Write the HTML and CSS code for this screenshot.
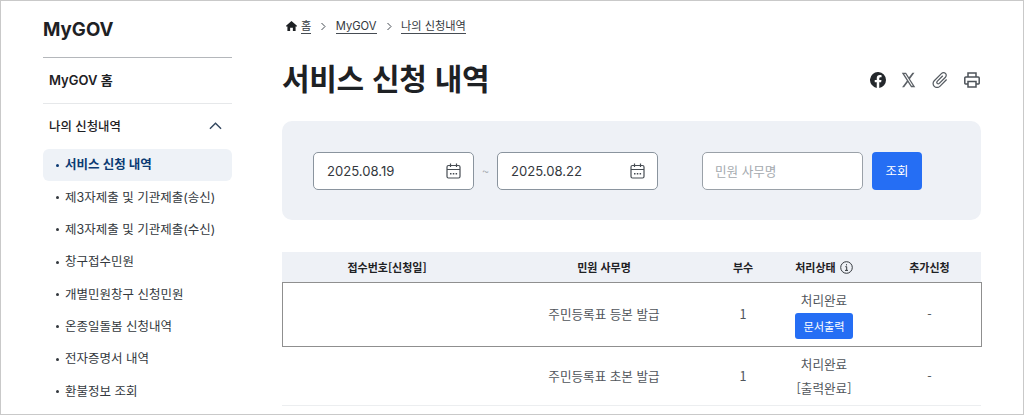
FILE: index.html
```html
<!DOCTYPE html>
<html lang="ko">
<head>
<meta charset="utf-8">
<title>서비스 신청 내역</title>
<link rel="stylesheet" href="styles.css">
</head>
<body>
<div class="frame">
  <aside class="side">
    <h2 class="brand">MyGOV</h2>
    <a class="home">MyGOV 홈</a>
    <div class="group">
      <span>나의 신청내역</span>
      <svg class="chev" width="14" height="8" viewBox="0 0 14 8"><path d="M1 7l6-6 6 6" fill="none" stroke="#33475f" stroke-width="1.5"/></svg>
    </div>
    <ul class="menu">
      <li class="on">서비스 신청 내역</li>
      <li>제3자제출 및 기관제출(송신)</li>
      <li>제3자제출 및 기관제출(수신)</li>
      <li>창구접수민원</li>
      <li>개별민원창구 신청민원</li>
      <li>온종일돌봄 신청내역</li>
      <li>전자증명서 내역</li>
      <li>환불정보 조회</li>
    </ul>
  </aside>
  <main class="main">
    <nav class="crumbs">
      <svg width="11" height="10" viewBox="0 0 12 11"><path d="M6 0L0 5.200V6h1.500v5h3V7.500h3V11h3V6H12v-.8z" fill="#1e2124"/></svg>
      <a class="first">홈</a>
      <svg class="sep" width="7" height="9" viewBox="0 0 7 9"><path d="M1.500 1l3.500 3.500L1.500 8" fill="none" stroke="#464c53" stroke-width="1"/></svg>
      <a>MyGOV</a>
      <svg class="sep" width="7" height="9" viewBox="0 0 7 9"><path d="M1.500 1l3.500 3.500L1.500 8" fill="none" stroke="#464c53" stroke-width="1"/></svg>
      <a>나의 신청내역</a>
    </nav>
    <header class="head">
      <h1>서비스 신청 내역</h1>
      <div class="tools">
        <svg width="16" height="16" viewBox="0 0 16 16"><path d="M16 8a8 8 0 1 0-9.250 7.900v-5.600H4.720V8h2.030V6.240c0-2 1.200-3.120 3.020-3.120.88 0 1.800.16 1.800.16v1.970h-1.010c-1 0-1.310.62-1.310 1.250V8h2.220l-.35 2.300H9.250v5.600A8 8 0 0 0 16 8z" fill="#24282c"/></svg>
        <svg class="x" width="15" height="18" viewBox="0 0 24 24" preserveAspectRatio="none"><path d="M18.244 2.250h3.308l-7.227 8.260 8.502 11.240H16.170l-5.214-6.817L4.990 21.750H1.680l7.730-8.835L1.254 2.250H8.080l4.713 6.231zm-1.161 17.520h1.833L7.084 4.126H5.117z" fill="#5c6167"/></svg>
        <svg class="clip" width="20" height="20" viewBox="0 0 24 24"><path transform="rotate(45 12 12)" d="M16.500 6v11.500c0 2.210-1.790 4-4 4s-4-1.790-4-4V5c0-1.380 1.120-2.500 2.500-2.500s2.500 1.120 2.500 2.500v10.500c0 .55-.45 1-1 1s-1-.45-1-1V6H10v9.500c0 1.380 1.120 2.500 2.500 2.500s2.500-1.120 2.500-2.500V5c0-2.210-1.790-4-4-4S7 2.790 7 5v12.500c0 3.040 2.460 5.500 5.500 5.500s5.500-2.460 5.500-5.500V6h-1.500z" fill="#555b61"/></svg>
        <svg width="16" height="16" viewBox="0 0 16 16"><path d="M4 5V1h8v4M4 12H1.500a.7.7 0 0 1-.7-.7V6a1 1 0 0 1 1-1h12.400a1 1 0 0 1 1 1v5.300a.7.7 0 0 1-.7.7H12M4 9.500h8V15H4z" fill="none" stroke="#4d5359" stroke-width="1.500"/></svg>
      </div>
    </header>
    <section class="search">
      <div class="field date"><span>2025.08.19</span><svg width="15" height="16" viewBox="0 0 15 16"><g fill="none" stroke="#464c53" stroke-width="1.200"><rect x="1" y="2.500" width="13" height="12.500" rx="1.500"/><path d="M1 6.500h13M4.500 0.500v3.500M10.500 0.500v3.500"/></g><path d="M4 10h1.500v1.500H4zM6.800 10h1.500v1.500H6.800zM9.600 10h1.500v1.500H9.600z" fill="#464c53"/></svg></div>
      <span class="tilde">~</span>
      <div class="field date"><span>2025.08.22</span><svg width="15" height="16" viewBox="0 0 15 16"><g fill="none" stroke="#464c53" stroke-width="1.200"><rect x="1" y="2.500" width="13" height="12.500" rx="1.500"/><path d="M1 6.500h13M4.500 0.500v3.500M10.500 0.500v3.500"/></g><path d="M4 10h1.500v1.500H4zM6.800 10h1.500v1.500H6.800zM9.600 10h1.500v1.500H9.600z" fill="#464c53"/></svg></div>
      <div class="field name">민원 사무명</div>
      <button class="go">조회</button>
    </section>
    <div class="table">
      <div class="row thead">
        <div>접수번호[신청일]</div>
        <div>민원 사무명</div>
        <div>부수</div>
        <div class="st">처리상태 <svg width="13" height="13" viewBox="0 0 13 13"><circle cx="6.500" cy="6.500" r="5.800" fill="none" stroke="#33383d" stroke-width="1"/><path d="M5.300 5.700h1.400v3.600M5 9.400h3M6.500 3.200v1.200" fill="none" stroke="#33383d" stroke-width="1"/></svg></div>
        <div>추가신청</div>
      </div>
      <div class="row body r1">
        <div></div>
        <div>주민등록표 등본 발급</div>
        <div>1</div>
        <div class="stack"><span>처리완료</span><a class="doc">문서출력</a></div>
        <div>-</div>
      </div>
      <div class="row body r2">
        <div></div>
        <div>주민등록표 초본 발급</div>
        <div>1</div>
        <div class="stack wide"><span>처리완료</span><span>[출력완료]</span></div>
        <div>-</div>
      </div>
    </div>
  </main>
</div>
</body>
</html>
```

FILE: styles.css
```css
* { box-sizing: border-box; }
html, body { margin: 0; height: 415px; overflow: hidden; background: #fff; }
body { font-family: "Noto Sans CJK KR", "Noto Sans", sans-serif; color: #1e2124; }
.frame {
  width: 1024px; height: 415px;
  border: 1px solid #c9c9c9;
  display: flex; overflow: hidden; padding-left: 42px;
}
.side { width: 189px; flex: none; margin-right: 50px; }
.brand { margin: 0; height: 57px; padding-top: 14px; font: 700 18.700px/30px Inter, "Noto Sans CJK KR", sans-serif; border-bottom: 1px solid #b4b7bb; }
.home { display: flex; align-items: center; height: 46px; padding: 0 0 1px 6px; font: 600 13px/20px Inter, "Noto Sans CJK KR", sans-serif; border-bottom: 1px solid #e6e8ea; color: #1e2124; }
.group { display: flex; align-items: center; justify-content: space-between; height: 45px; padding: 0 10px 2px 6px; font-size: 12.400px; font-weight: 500; color: #1e2124; }
.chev { width: 13px; }
.menu { list-style: none; margin: 0; padding: 0; }
.menu li { height: 32.350px; display: flex; align-items: center; padding-left: 13px; font: 400 12.500px/20px Inter, "Noto Sans CJK KR", sans-serif; color: #33383d; }
.menu li::before { content: ""; width: 3px; height: 3px; border-radius: 50%; background: #33383d; margin-right: 6px; flex: none; }
.menu li.on { background: #eef2f7; border-radius: 6px; color: #0b3a73; font-weight: 600; }
.menu li.on::before { background: #0b3a73; }
.main { width: 699px; flex: none; }
.crumbs { display: flex; align-items: center; height: 16px; margin-top: 17px; font: 400 11.200px/16px Inter, "Noto Sans CJK KR", sans-serif; color: #33383d; padding-left: 4px; }
.crumbs a { border-bottom: 1px solid #464c53; height: 16px; line-height: 17px; }
.crumbs .first { margin-left: 4px; }
.crumbs .sep { margin: 0 8.500px 0 9px; }
.head { display: flex; align-items: center; justify-content: space-between; height: 46px; margin-top: 20px; padding-right: 1px; }
h1 { margin: 0; font-size: 30px; line-height: 46px; font-weight: 700; color: #1e2124; letter-spacing: -.3px; }
.tools { display: flex; align-items: center; gap: 15px; margin-top: 5px; }
.clip { margin: 0 -1px; }
.search { display: flex; align-items: center; margin-top: 21px; height: 99px; background: #eef1f6; border-radius: 10px; padding: 0 31px; }
.field { height: 38px; background: #fff; border: 1px solid #8a949e; border-radius: 5px; display: flex; align-items: center; font-size: 12.600px; }
.date { width: 161px; justify-content: space-between; padding: 0 12px 0 13px; font: 400 13.100px/20px Inter, sans-serif; color: #33383d; }
.tilde { width: 23px; text-align: center; color: #a0a6ac; font-size: 12px; }
.name { width: 161px; margin-left: 44px; padding-left: 12px; color: #a4a9ae; border-color: #9aa1a8; }
.go { width: 50px; height: 38px; margin-left: 9px; background: #256ef4; color: #fff; border: 0; border-radius: 4px; font: 400 12.400px/20px "Noto Sans CJK KR", sans-serif; padding: 0; }
.table { margin-top: 32px; font-size: 12.600px; color: #50555b; }
.row { display: grid; grid-template-columns: 210px 224px 54px 108px 1fr; align-items: center; text-align: center; }
.thead { height: 30px; background: #eef1f6; font-size: 11px; font-weight: 700; color: #1e2124; }
.st { display: flex; align-items: center; justify-content: center; gap: 4px; }
.r1 { height: 65px; border: 1px solid #8f8f8f; width: 700px; grid-template-columns: 209px 224px 54px 108px 1fr; }
.r2 { height: 59px; border-bottom: 1px solid #eceef0; }
.r1 > div { padding-bottom: 3px; }
.r2 > div { padding-bottom: 2px; }
.r1 > .stack, .r2 > .stack { padding-bottom: 0; }
.stack { display: flex; flex-direction: column; align-items: center; gap: 3px; line-height: 20px; }
.stack.wide { gap: 4px; }
.doc { height: 26px; width: 58px; line-height: 26px; background: #256ef4; color: #fff; border-radius: 3px; font-size: 11.200px; }
```
